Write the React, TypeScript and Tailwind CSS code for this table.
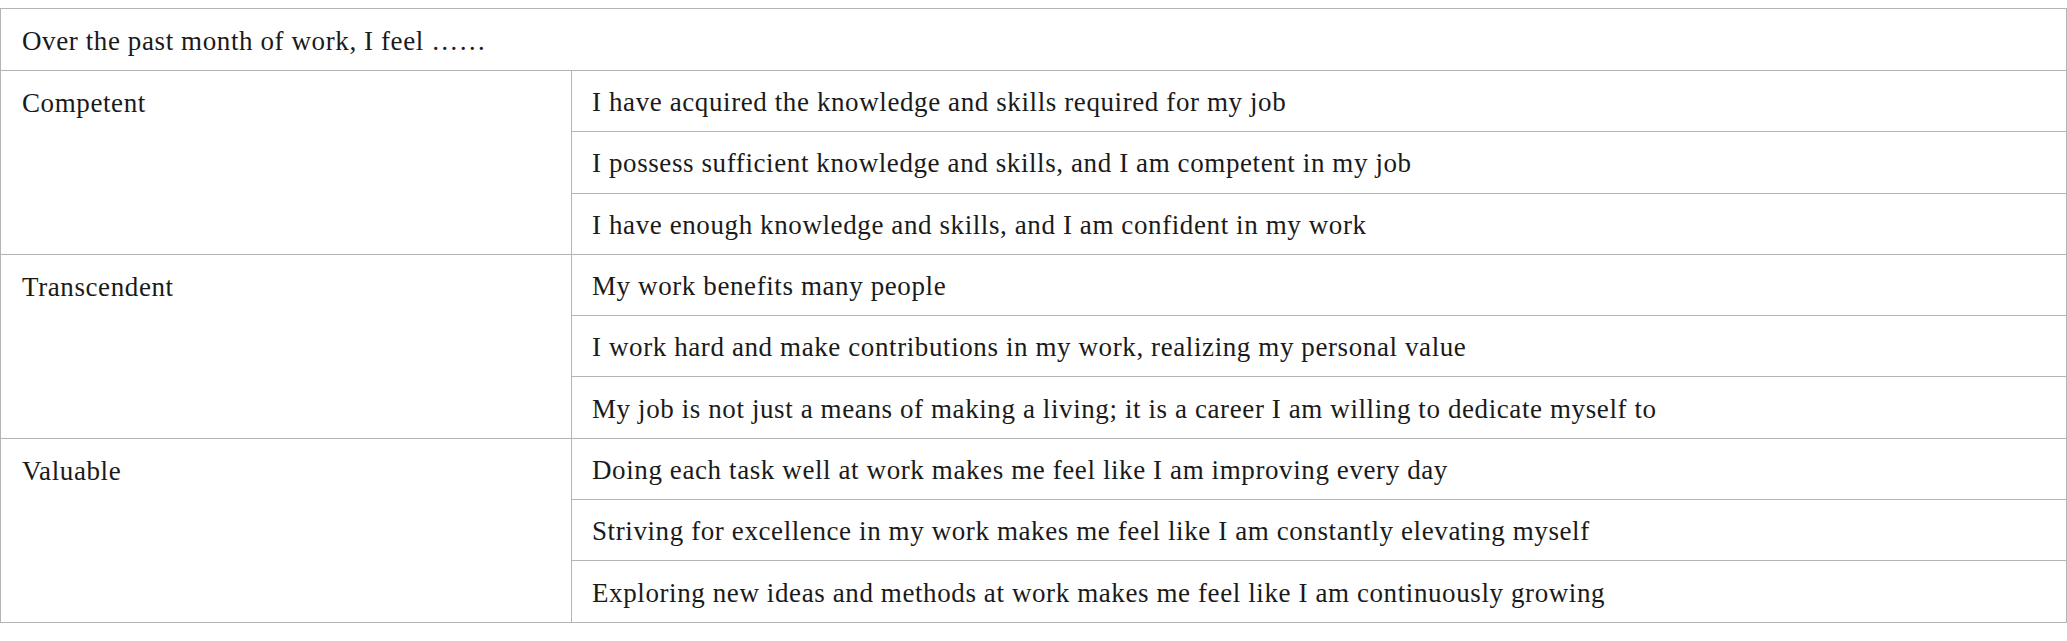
import React from "react";

const groups: { label: string; items: string[] }[] = [
  {
    label: "Competent",
    items: [
      "I have acquired the knowledge and skills required for my job",
      "I possess sufficient knowledge and skills, and I am competent in my job",
      "I have enough knowledge and skills, and I am confident in my work",
    ],
  },
  {
    label: "Transcendent",
    items: [
      "My work benefits many people",
      "I work hard and make contributions in my work, realizing my personal value",
      "My job is not just a means of making a living; it is a career I am willing to dedicate myself to",
    ],
  },
  {
    label: "Valuable",
    items: [
      "Doing each task well at work makes me feel like I am improving every day",
      "Striving for excellence in my work makes me feel like I am constantly elevating myself",
      "Exploring new ideas and methods at work makes me feel like I am continuously growing",
    ],
  },
];

export default function App() {
  return (
    <div className="w-[2067px] h-[641px] bg-white pt-[8px]" style={{ fontFamily: '"Liberation Serif", "Times New Roman", serif' }}>
      <table className="w-[2067px] border-collapse text-[27px] tracking-[0.6px] leading-none text-[#1a1a1a] table-fixed">
        <colgroup>
          <col className="w-[571px]" />
          <col />
        </colgroup>
        <tbody>
          <tr className="h-[62px]">
            <td colSpan={2} className="border-[1.5px] border-[#b4b4b4] px-[21px] pt-[3px] align-middle">
              Over the past month of work, I feel ……
            </td>
          </tr>
          {groups.map((g) =>
            g.items.map((item, i) => (
              <tr key={g.label + i} className="h-[61.3px]">
                {i === 0 && (
                  <td rowSpan={3} className="border-[1.5px] border-[#b4b4b4] px-[21px] pt-[19px] align-top">
                    {g.label}
                  </td>
                )}
                <td className="border-[1.5px] border-[#b4b4b4] px-[20px] pt-[3px] align-middle">{item}</td>
              </tr>
            ))
          )}
        </tbody>
      </table>
    </div>
  );
}
